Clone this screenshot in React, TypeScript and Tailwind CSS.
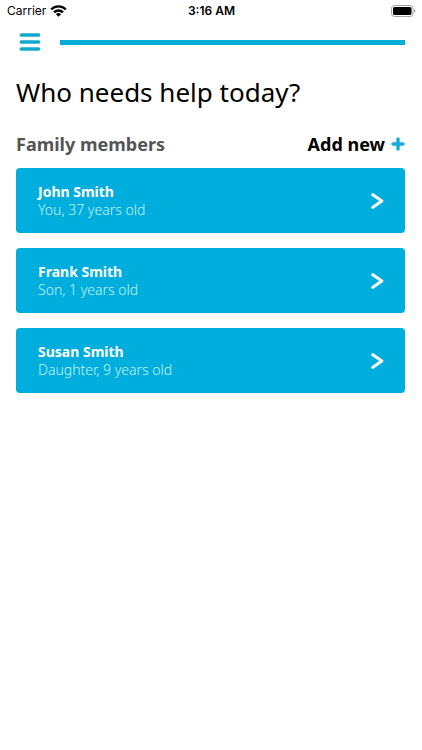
const MEMBERS = [
  { name: 'John Smith', relation: 'You', age: 37 },
  { name: 'Frank Smith', relation: 'Son', age: 1 },
  { name: 'Susan Smith', relation: 'Daughter', age: 9 },
];

const StatusBar = () => (
  <div className="grid grid-cols-3 items-center h-[22px] pl-[7px] pr-[6px] font-['Inter',sans-serif] text-[12px] leading-4">
    <div className="flex items-center gap-1">
      <span>Carrier</span>
      <svg width="17" height="12" viewBox="0 0 17 12" fill="none" stroke="#000" strokeWidth="2.4" aria-hidden="true">
        <path d="M1.2 4.4a10.4 10.4 0 0 1 14.6 0" />
        <path d="M4 7.3a6.4 6.4 0 0 1 9 0" />
        <path d="M8.5 11.8 5.9 9.2a3.7 3.7 0 0 1 5.2 0Z" fill="#000" stroke="none" />
      </svg>
    </div>
    <span className="text-center font-semibold">3:16 AM</span>
    <svg className="justify-self-end" width="25" height="12" viewBox="0 0 25 12" aria-hidden="true">
      <rect x="0.5" y="0.5" width="21.5" height="11" rx="3" fill="none" stroke="#a3a3a3" />
      <rect x="2" y="2" width="18.5" height="8" rx="1.6" fill="#000" />
      <path d="M23.2 4.2v3.6c1.5-.6 1.5-3 0-3.6Z" fill="#8a8a8a" />
    </svg>
  </div>
);

const Header = () => (
  <header className="flex items-center gap-[19px] h-10 pl-[3px]">
    <button type="button" aria-label="Menu" className="shrink-0">
      <svg width="22" height="18" viewBox="0 0 22 18" stroke="#12a9cf" strokeWidth="3.4" strokeLinecap="round">
        <path d="M2.2 2h17.4M2.2 9h17.4M2.2 16h17.4" />
      </svg>
    </button>
    <div className="grow h-[5px] bg-[#06acd6]" />
  </header>
);

const MemberCard = ({ name, relation, age }: { name: string; relation: string; age: number }) => (
  <button
    type="button"
    className="flex items-center justify-between w-full h-[65px] pl-[22px] pr-[21px] rounded bg-[#00aedd] text-left text-white"
  >
    <span className="flex flex-col text-[14px] leading-[18px]">
      <span className="font-bold">{name}</span>
      <span className="font-light text-[#c4f0fb]">{relation}, {age} years old</span>
    </span>
    <svg width="13" height="16" viewBox="0 0 13 16" fill="none" stroke="#fff" strokeWidth="3" strokeLinecap="round" strokeLinejoin="round" aria-hidden="true">
      <path d="M1.8 1.7 10.9 8 1.8 14.3" />
    </svg>
  </button>
);

const App = () => {
  return (
    <div className="min-h-screen bg-white text-black font-['Noto_Sans',sans-serif]">
      <StatusBar />
      <div className="pl-4 pr-[17px]">
        <Header />
        <main>
          <h1 className="mt-3 text-[26px] leading-9">Who needs help today?</h1>
          <div className="flex items-center justify-between mt-[22px] mb-3 text-[18px] leading-6 font-bold">
            <h2 className="text-[#555]">Family members</h2>
            <button type="button" className="flex items-center gap-[6px] font-bold">
              Add new
              <svg width="14" height="14" viewBox="0 0 14 14" stroke="#14acd6" strokeWidth="3.4" strokeLinecap="round" aria-hidden="true">
                <path d="M7 2v10M2 7h10" />
              </svg>
            </button>
          </div>
          <ul className="flex flex-col gap-[15px]">
            {MEMBERS.map((member) => (
              <li key={member.name}>
                <MemberCard {...member} />
              </li>
            ))}
          </ul>
        </main>
      </div>
    </div>
  );
};

export default App;
